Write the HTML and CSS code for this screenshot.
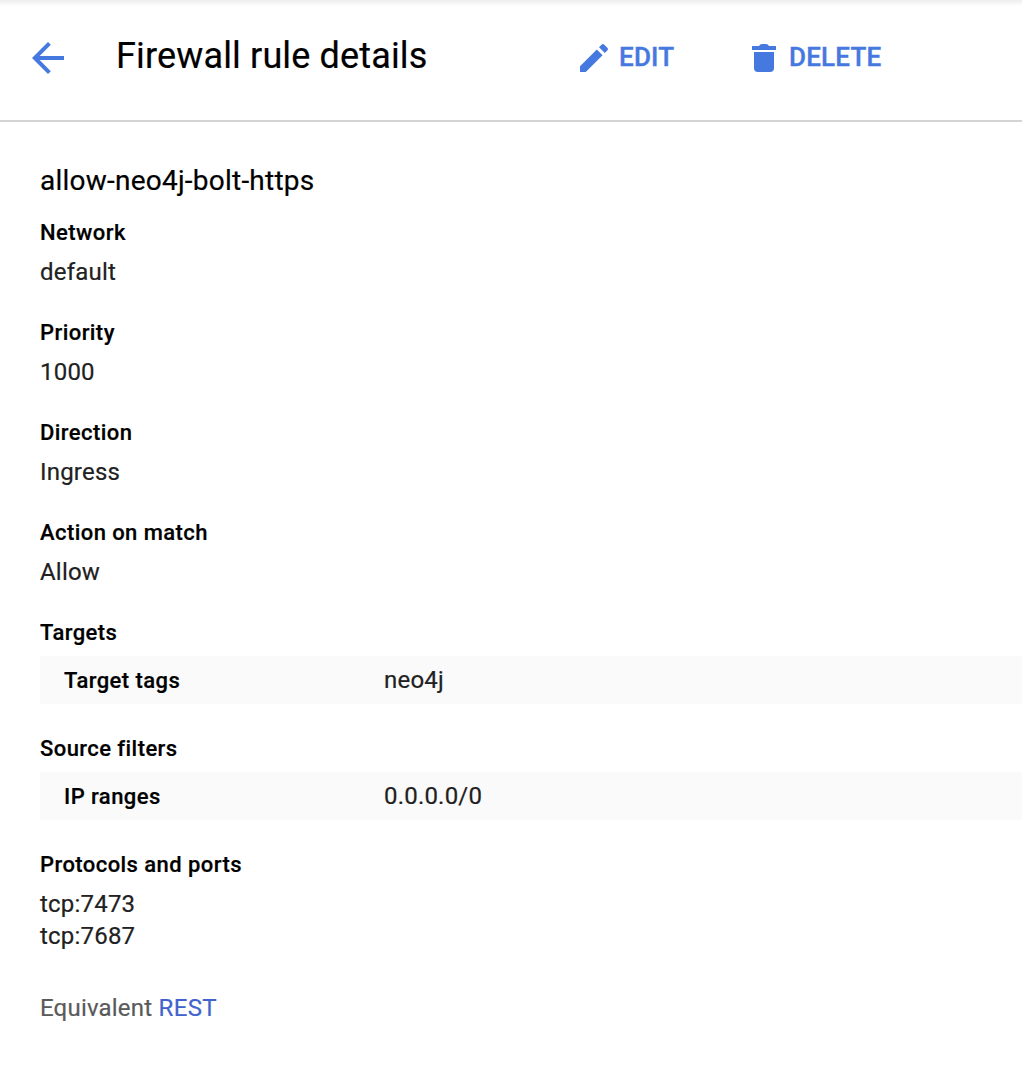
FILE: index.html
```
<!DOCTYPE html>
<html lang="en">
<head>
<meta charset="utf-8">
<title>Firewall rule details</title>
<link rel="stylesheet" href="styles.css">
</head>
<body>
<header class="toolbar">
  <svg class="back" width="32" height="32" viewBox="4 4 16 16"><path d="M20 11H7.83l5.59-5.59L12 4l-8 8 8 8 1.41-1.41L7.83 13H20v-2z"/></svg>
  <h1 class="title">Firewall rule details</h1>
  <div class="action edit"><svg width="28" height="28" viewBox="0 0 28 28"><path d="M0 22.2 16.8 5.4 22.6 11.2 5.8 28H0zM19 3.2 21.5.7a2 2 0 0 1 2.8 0l3 3a2 2 0 0 1 0 2.8L24.8 9z"/></svg><span class="action-label">EDIT</span></div>
  <div class="action delete"><svg width="24" height="28" viewBox="0 0 24 28"><path d="M0 2h7q1-2 3-2h4q2 0 3 2h7v4H0zM2 8h20v16a4 4 0 0 1-4 4H6a4 4 0 0 1-4-4z"/></svg><span class="action-label">DELETE</span></div>
</header>
<main class="details">
  <h2 class="name">allow-neo4j-bolt-https</h2>
  <section class="field"><h3>Network</h3><p>default</p></section>
  <section class="field"><h3>Priority</h3><p>1000</p></section>
  <section class="field"><h3>Direction</h3><p>Ingress</p></section>
  <section class="field"><h3>Action on match</h3><p>Allow</p></section>
  <section class="group"><h3>Targets</h3><div class="row"><b>Target tags</b><span>neo4j</span></div></section>
  <section class="group"><h3>Source filters</h3><div class="row"><b>IP ranges</b><span>0.0.0.0/0</span></div></section>
  <section class="ports"><h3>Protocols and ports</h3><p>tcp:7473</p><p>tcp:7687</p></section>
  <p class="equivalent">Equivalent <a class="rest">REST</a></p>
</main>
</body>
</html>
```
FILE: styles.css
```
* { box-sizing: border-box; }
body { margin: 0; background: #fff; color: #212121; font: 24px/32px Roboto, sans-serif; letter-spacing: .2px; -webkit-text-stroke: .2px; height: 1072px; overflow: hidden; }
h1, h2, h3, p { margin: 0; font-weight: 400; }
.toolbar { display: flex; align-items: center; height: 122px; padding: 2px 0 6px 32px; background: linear-gradient(#ededed, #fff 6px); border-bottom: 2px solid #d4d4d4; }
svg { display: block; fill: #4679df; flex: none; }
.title { width: 464px; margin-left: 52px; padding-bottom: 4px; font-size: 36px; line-height: 44px; letter-spacing: .15px; color: #000; white-space: nowrap; }
.action { display: flex; align-items: center; color: #4679df; font-weight: 500; font-size: 26px; letter-spacing: .2px; -webkit-text-stroke: .4px; }
.action-label { padding-bottom: 2px; }
.edit { width: 172px; gap: 11px; }
.delete { gap: 13px; }
.details { padding: 43px 0 0 40px; }
.name { font-size: 28px; line-height: 32px; letter-spacing: .23px; color: #000; margin-bottom: 20px; }
h3 { font-size: 22px; line-height: 32px; font-weight: 500; color: #000; letter-spacing: .43px; }
.field { height: 100px; }
.field p { margin-top: 7px; }
.group { height: 116px; }
.row { display: flex; align-items: center; height: 48px; margin-top: 7px; padding-left: 24px; background: #fafafa; }
.row b { width: 320px; padding-top: 2px; font-size: 22px; font-weight: 500; color: #000; letter-spacing: .43px; }
.ports h3 { margin-bottom: 7px; }
.equivalent { margin-top: 40px; color: #5a5a5a; }
.rest { color: #4263cd; letter-spacing: .4px; }
```
